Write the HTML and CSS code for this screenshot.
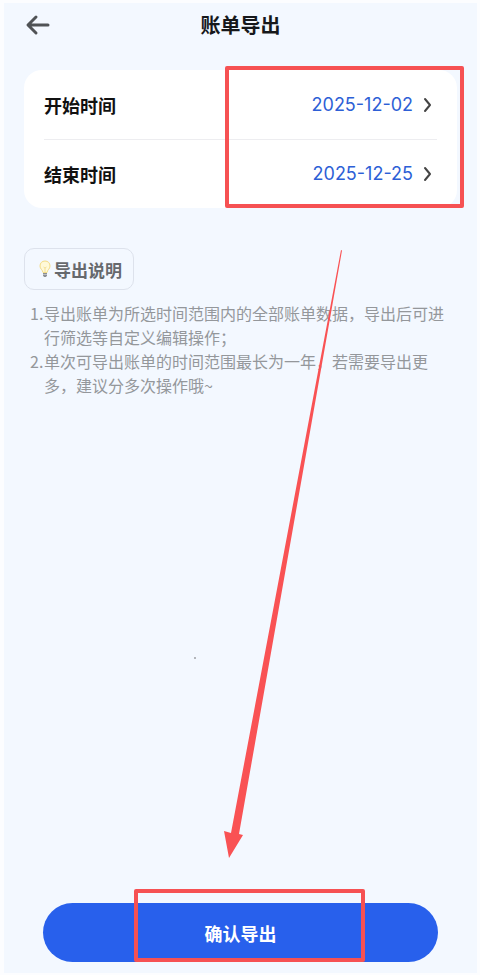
FILE: index.html
```html
<!DOCTYPE html>
<html lang="zh-CN">
<head>
  <meta charset="UTF-8" />
  <meta name="viewport" content="width=device-width, initial-scale=1.0" />
  <title>账单导出</title>
  <link rel="stylesheet" href="styles.css">
</head>
<body>
  <div class="page">
    <header class="header">
      <button class="back" type="button" aria-label="返回">
        <svg width="28" height="22" viewBox="0 0 28 22">
          <path d="M12 3 L4 11 L12 19 M4.500 11 H24" />
        </svg>
      </button>
      <h1 class="title">账单导出</h1>
    </header>

    <main class="content">
      <section class="card">
        <div class="row">
          <span class="label" id="start-label">开始时间</span>
          <button class="date" type="button" aria-labelledby="start-label start-date">
            <span id="start-date">2025-12-02</span>
            <svg class="chevron" width="10" height="16" viewBox="0 0 10 16"><path d="M2 2 L7 8 L2 14" /></svg>
          </button>
        </div>
        <div class="row">
          <span class="label" id="end-label">结束时间</span>
          <button class="date" type="button" aria-labelledby="end-label end-date">
            <span id="end-date">2025-12-25</span>
            <svg class="chevron" width="10" height="16" viewBox="0 0 10 16"><path d="M2 2 L7 8 L2 14" /></svg>
          </button>
        </div>
        <div class="mark mark-dates"></div>
      </section>

      <h2 class="tip">
        <svg width="12" height="18" viewBox="0 0 12 18">
          <path d="M6 1 C3 1 1 3 1 6 C1 9 3.500 9.500 4 12.500 H8 C8.500 9.500 11 9 11 6 C11 3 9 1 6 1 Z" fill="#fff9d8" stroke="#f3dc85" />
          <path d="M4.500 7 L6 8 L7.500 7 M6 8 V12" fill="none" stroke="#f0d985" stroke-width="0.8" />
          <path d="M4 13 H8 V15.500 L7 17 H5 L4 15.500 Z" fill="#8b8f94" />
          <path d="M4 14.500 H8" stroke="#c9ccd0" stroke-width="0.8" />
        </svg>
        导出说明
      </h2>

      <ol class="notes">
        <li>导出账单为所选时间范围内的全部账单数据，导出后可进行筛选等自定义编辑操作；</li>
        <li>单次可导出账单的时间范围最长为一年，若需要导出更多，建议分多次操作哦~</li>
      </ol>
    </main>

    <footer class="footer">
      <button class="submit" type="button">确认导出</button>
      <div class="mark mark-submit"></div>
    </footer>

    <!-- arrow from the dates down to the export button -->
    <svg class="arrow" width="160" height="612" viewBox="0 0 160 612" aria-hidden="true">
      <path d="M159 0 L160 0.500 L57 584 L61 585 L47 608 L42 581 L49 583 Z" />
      <circle cx="13" cy="408" r="0.700" />
    </svg>
  </div>
</body>
</html>
```
FILE: styles.css
```css
* {
  box-sizing: border-box;
}
body {
  margin: 0;
  background-color: #fcfdff;
  font-family: "Noto Sans CJK SC", sans-serif;
}
button {
  padding: 0;
  border: none;
  background: none;
  font-family: inherit;
  cursor: pointer;
}
svg {
  display: block;
  flex: none;
}
.page {
  position: relative;
  display: flex;
  flex-direction: column;
  min-height: 100vh;
  padding: 0 20px 11px;
  border: 3px solid #fcfdff;
  border-width: 3px 3px 2px 4px;
  background-color: #f3f8ff;
}
.header {
  display: grid;
  grid-template-columns: 40px 1fr 40px;
  align-items: center;
  height: 43px;
}
.back path {
  fill: none;
  stroke: #505356;
  stroke-width: 3;
  stroke-linecap: round;
  stroke-linejoin: round;
}
.title {
  margin: 0;
  font-size: 20px;
  font-weight: 700;
  line-height: 28px;
  text-align: center;
  color: #16181b;
}
.content {
  padding-top: 24px;
}
.card {
  position: relative;
  padding: 0 20px;
  border-radius: 18px;
  background-color: #fff;
}
.row {
  display: flex;
  align-items: center;
  justify-content: space-between;
  height: 69px;
}
.row + .row {
  border-top: 1px solid #ededf0;
}
.label {
  font-size: 18px;
  font-weight: 700;
  line-height: 26px;
  color: #111;
}
.date {
  display: flex;
  align-items: center;
  gap: 10px;
  padding-right: 4px;
  font-family: Inter, sans-serif;
  font-size: 18px;
  line-height: 24px;
  color: #2d5fd6;
}
.chevron path {
  fill: none;
  stroke: #444;
  stroke-width: 2;
  stroke-linecap: round;
  stroke-linejoin: round;
}
.tip {
  display: flex;
  align-items: center;
  gap: 3px;
  width: fit-content;
  height: 42px;
  margin: 40px 0 11px;
  padding: 0 11px 0 14px;
  border: 1px solid #dde2ec;
  border-radius: 10px;
  font-size: 17px;
  font-weight: 700;
  color: #66696d;
}
.notes {
  margin: 0;
  padding: 0 4px 0 20px;
  list-style: none;
  counter-reset: note;
  font-size: 16px;
  line-height: 24px;
  color: #94979b;
}
.notes li {
  counter-increment: note;
}
.notes li::before {
  content: counter(note) ".";
  display: inline-block;
  width: 14px;
  margin-left: -14px;
}
.footer {
  position: relative;
  margin-top: auto;
  padding: 0 19px;
}
.submit {
  width: 100%;
  height: 59px;
  border-radius: 30px;
  background-color: #2860ec;
  font-size: 18px;
  font-weight: 700;
  color: #fff;
}

/* red highlights over the page */
.mark {
  position: absolute;
  border: 4px solid #f65153;
  border-radius: 2px;
  pointer-events: none;
}
.mark-dates {
  top: -4px;
  right: -7px;
  bottom: 0;
  width: 239px;
}
.mark-submit {
  top: -14px;
  bottom: 0;
  left: 50%;
  width: 231px;
  margin-left: -107px;
}
.arrow {
  position: absolute;
  top: 247px;
  left: 50%;
  margin-left: -59px;
  pointer-events: none;
}
.arrow path {
  fill: #f95254;
}
.arrow circle {
  fill: #444;
}
```
